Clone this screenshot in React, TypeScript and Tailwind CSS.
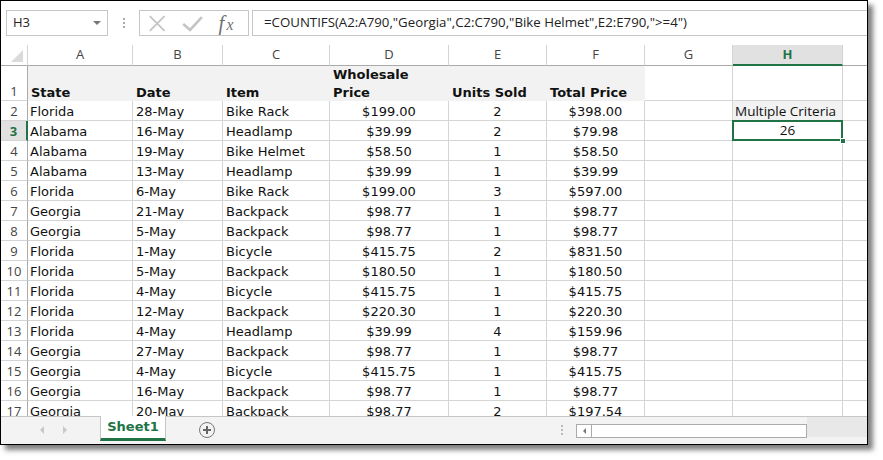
import React from "react";

const rows: string[][] = [
  ["Florida", "28-May", "Bike Rack", "$199.00", "2", "$398.00"],
  ["Alabama", "16-May", "Headlamp", "$39.99", "2", "$79.98"],
  ["Alabama", "19-May", "Bike Helmet", "$58.50", "1", "$58.50"],
  ["Alabama", "13-May", "Headlamp", "$39.99", "1", "$39.99"],
  ["Florida", "6-May", "Bike Rack", "$199.00", "3", "$597.00"],
  ["Georgia", "21-May", "Backpack", "$98.77", "1", "$98.77"],
  ["Georgia", "5-May", "Backpack", "$98.77", "1", "$98.77"],
  ["Florida", "1-May", "Bicycle", "$415.75", "2", "$831.50"],
  ["Florida", "5-May", "Backpack", "$180.50", "1", "$180.50"],
  ["Florida", "4-May", "Bicycle", "$415.75", "1", "$415.75"],
  ["Florida", "12-May", "Backpack", "$220.30", "1", "$220.30"],
  ["Florida", "4-May", "Headlamp", "$39.99", "4", "$159.96"],
  ["Georgia", "27-May", "Backpack", "$98.77", "1", "$98.77"],
  ["Georgia", "4-May", "Bicycle", "$415.75", "1", "$415.75"],
  ["Georgia", "16-May", "Backpack", "$98.77", "1", "$98.77"],
  ["Georgia", "20-May", "Backpack", "$98.77", "2", "$197.54"],
];

const W = ["w-[105px]", "w-[90px]", "w-[107px]", "w-[119px]", "w-[98px]", "w-[98px]"];
const cellFont = "font-['DejaVu_Sans',sans-serif] text-[13px] text-[#111]";
const uiFont = "font-['Open_Sans',sans-serif]";

function ColHeader() {
  const letters = ["A", "B", "C", "D", "E", "F", "G"];
  const widths = [...W, "w-[88px]"];
  return (
    <div className={`flex h-[21px] ${uiFont} text-[13px] text-[#444]`}>
      <div className="w-[27px] h-full border-r border-b border-r-[#d4d4d4] border-b-[#ababab] relative shrink-0">
        <div className="absolute right-[4px] bottom-[3px] w-0 h-0 border-l-[12px] border-l-transparent border-b-[12px] border-b-[#dadada]" />
      </div>
      {letters.map((l, i) => (
        <div key={l} className={`${widths[i]} shrink-0 h-full border-r border-b border-r-[#d4d4d4] border-b-[#ababab] flex items-center justify-center`}>
          {l}
        </div>
      ))}
      <div className="w-[110px] shrink-0 h-full bg-[#e1e1e1] border-r border-r-[#d4d4d4] border-b-2 border-b-[#217346] flex items-center justify-center font-bold text-[#217346]">
        H
      </div>
      <div className="flex-1 h-full border-b border-b-[#ababab]" />
    </div>
  );
}

function RowNum({ n, active }: { n: number; active?: boolean }) {
  return (
    <div
      className={`w-[27px] shrink-0 h-full border-b border-b-[#d4d4d4] flex items-end justify-center ${uiFont} text-[13px] leading-[17px] ${
        active ? "bg-[#e1e1e1] text-[#217346] font-bold border-r-2 border-r-[#217346]" : "text-[#444] border-r border-r-[#ababab]"
      }`}
    >
      {n}
    </div>
  );
}

function HeaderRow() {
  const g = "bg-[#f2f2f2] border-r border-b border-[#f2f2f2] shrink-0 h-full flex items-end px-[3px] font-bold leading-[18px]";
  return (
    <div className={`flex h-[35px] ${cellFont}`}>
      <RowNum n={1} />
      <div className={`${W[0]} ${g}`}><div className="-mb-[2px]">State</div></div>
      <div className={`${W[1]} ${g}`}><div className="-mb-[2px]">Date</div></div>
      <div className={`${W[2]} ${g}`}><div className="-mb-[2px]">Item</div></div>
      <div className={`${W[3]} ${g}`}>
        <div className="-mb-[2px]">
          Wholesale
          <br />
          Price
        </div>
      </div>
      <div className={`${W[4]} ${g}`}><div className="-mb-[2px]">Units Sold</div></div>
      <div className={`${W[5]} ${g}`}><div className="-mb-[2px]">Total Price</div></div>
      <div className="w-[88px] shrink-0 h-full border-r border-b border-[#d4d4d4]" />
      <div className="w-[110px] shrink-0 h-full border-r border-b border-[#d4d4d4]" />
      <div className="flex-1 h-full border-b border-[#d4d4d4]" />
    </div>
  );
}

function DataRow({ r, n }: { r: string[]; n: number }) {
  const base = "shrink-0 h-full border-r border-b border-[#d4d4d4] flex items-end leading-[16px] whitespace-nowrap overflow-hidden";
  return (
    <div className={`flex h-[20px] ${cellFont}`}>
      <RowNum n={n} active={n === 3} />
      <div className={`${W[0]} ${base} px-[2px]`}>{r[0]}</div>
      <div className={`${W[1]} ${base} px-[3px]`}>{r[1]}</div>
      <div className={`${W[2]} ${base} px-[3px]`}>{r[2]}</div>
      <div className={`${W[3]} ${base} justify-center`}>{r[3]}</div>
      <div className={`${W[4]} ${base} justify-center`}>{r[4]}</div>
      <div className={`${W[5]} ${base} justify-center`}>{r[5]}</div>
      <div className={`w-[88px] ${base}`} />
      {n === 2 ? (
        <div className={`w-[110px] ${base} bg-[#f2f2f2] px-[2px] ${uiFont} text-[13.5px] text-[#111] leading-[18px]`}>
          Multiple Criteria
        </div>
      ) : n === 3 ? (
        <div className={`w-[110px] shrink-0 h-full relative border-b border-r border-[#d4d4d4]`}>
          <div className={`absolute left-[-1px] top-[-1px] right-[-1px] bottom-[-1px] border-2 border-[#217346] flex items-center justify-center ${uiFont} text-[13.5px] text-[#111]`}>
            26
          </div>
          <div className="absolute right-[-4px] bottom-[-4px] w-[6px] h-[6px] bg-[#217346] border border-white" />
        </div>
      ) : (
        <div className={`w-[110px] ${base}`} />
      )}
      <div className="flex-1 h-full border-b border-[#d4d4d4]" />
    </div>
  );
}

function Toolbar() {
  return (
    <div className="h-[44px] flex items-start pt-[9px] bg-white shrink-0">
      <div className={`ml-[5px] w-[102px] h-[26px] border border-[#c6c6c6] flex items-center justify-between pl-[6px] pr-[6px] ${uiFont} text-[13px] text-[#222]`}>
        <span>H3</span>
        <div className="w-0 h-0 border-l-[4px] border-r-[4px] border-t-[4px] border-l-transparent border-r-transparent border-t-[#777]" />
      </div>
      <div className="w-[31px] h-[26px] flex flex-col items-center justify-center gap-[2px]">
        <div className="w-[2px] h-[2px] bg-[#aaa]" />
        <div className="w-[2px] h-[2px] bg-[#aaa]" />
        <div className="w-[2px] h-[2px] bg-[#aaa]" />
      </div>
      <div className="w-[110px] h-[26px] border border-[#c6c6c6] flex items-center">
        <svg width="110" height="24" viewBox="0 0 110 24">
          <path d="M10 5 L25 20 M25 5 L10 20" stroke="#c4c4c4" strokeWidth="1.8" fill="none" />
          <path d="M44 13 L51 19 L63 6" stroke="#c4c4c4" strokeWidth="2.6" fill="none" />
          <text x="80" y="19" fontFamily="'Liberation Serif', serif" fontStyle="italic" fontSize="21" fill="#6f6f6f">
            f
          </text>
          <text x="88" y="19" fontFamily="'Liberation Serif', serif" fontStyle="italic" fontSize="16" fill="#6f6f6f">
            x
          </text>
        </svg>
      </div>
      <div className={`ml-[3px] flex-1 h-[26px] border-t border-b border-l border-[#c6c6c6] flex items-center pl-[11px] ${uiFont} text-[13.25px] text-[#222] whitespace-nowrap`}>
        =COUNTIFS(A2:A790,"Georgia",C2:C790,"Bike Helmet",E2:E790,"&gt;=4")
      </div>
    </div>
  );
}

function TabBar() {
  return (
    <div className="h-[28px] shrink-0 border-t border-[#c6c6c6] bg-[#f3f3f3] flex relative">
      <div className="w-[99px] flex items-center justify-center gap-[19px] pb-[2px]">
        <div className="ml-[6px] w-0 h-0 border-t-[4px] border-b-[4px] border-r-[4px] border-t-transparent border-b-transparent border-r-[#c8c8c8]" />
        <div className="w-0 h-0 border-t-[4px] border-b-[4px] border-l-[4px] border-t-transparent border-b-transparent border-l-[#c8c8c8]" />
      </div>
      <div className={`-mt-px w-[66px] h-[25px] bg-white border-l border-r border-[#c6c6c6] border-b-[3px] border-b-[#217346] flex items-center justify-center ${cellFont} font-bold text-[13px] text-[#217346]`}>
        Sheet1
      </div>
      <div className="ml-[33px] mt-[5px] w-[16px] h-[16px] rounded-full border border-[#777] flex items-center justify-center relative">
        <div className="absolute w-[8px] h-[1.5px] bg-[#666]" />
        <div className="absolute w-[1.5px] h-[8px] bg-[#666]" />
      </div>
      <div className="ml-[346px] mt-[8px] flex flex-col gap-[2px]">
        <div className="w-[2px] h-[2px] bg-[#bbb]" />
        <div className="w-[2px] h-[2px] bg-[#bbb]" />
        <div className="w-[2px] h-[2px] bg-[#bbb]" />
      </div>
      <div className="ml-[13px] mt-[7px] w-[231px] h-[14px] bg-white border border-[#ababab] flex">
        <div className="w-[15px] h-full border-r border-[#ababab] flex items-center justify-center">
          <div className="w-0 h-0 border-t-[3px] border-b-[3px] border-r-[3px] border-t-transparent border-b-transparent border-r-[#777]" />
        </div>
      </div>
      <div className="flex-1 h-[20px] bg-[#e8e8e8]" />
    </div>
  );
}

export default function App() {
  return (
    <div className="w-[883px] h-[460px] bg-white">
      <div className="w-[868px] h-[445px] border border-black bg-white flex flex-col overflow-hidden shadow-[5px_5px_5px_rgba(0,0,0,0.5)]">
        <Toolbar />
        <div className="h-[371px] overflow-hidden shrink-0">
          <ColHeader />
          <HeaderRow />
          {rows.map((r, i) => (
            <DataRow key={i} r={r} n={i + 2} />
          ))}
        </div>
        <TabBar />
      </div>
    </div>
  );
}
